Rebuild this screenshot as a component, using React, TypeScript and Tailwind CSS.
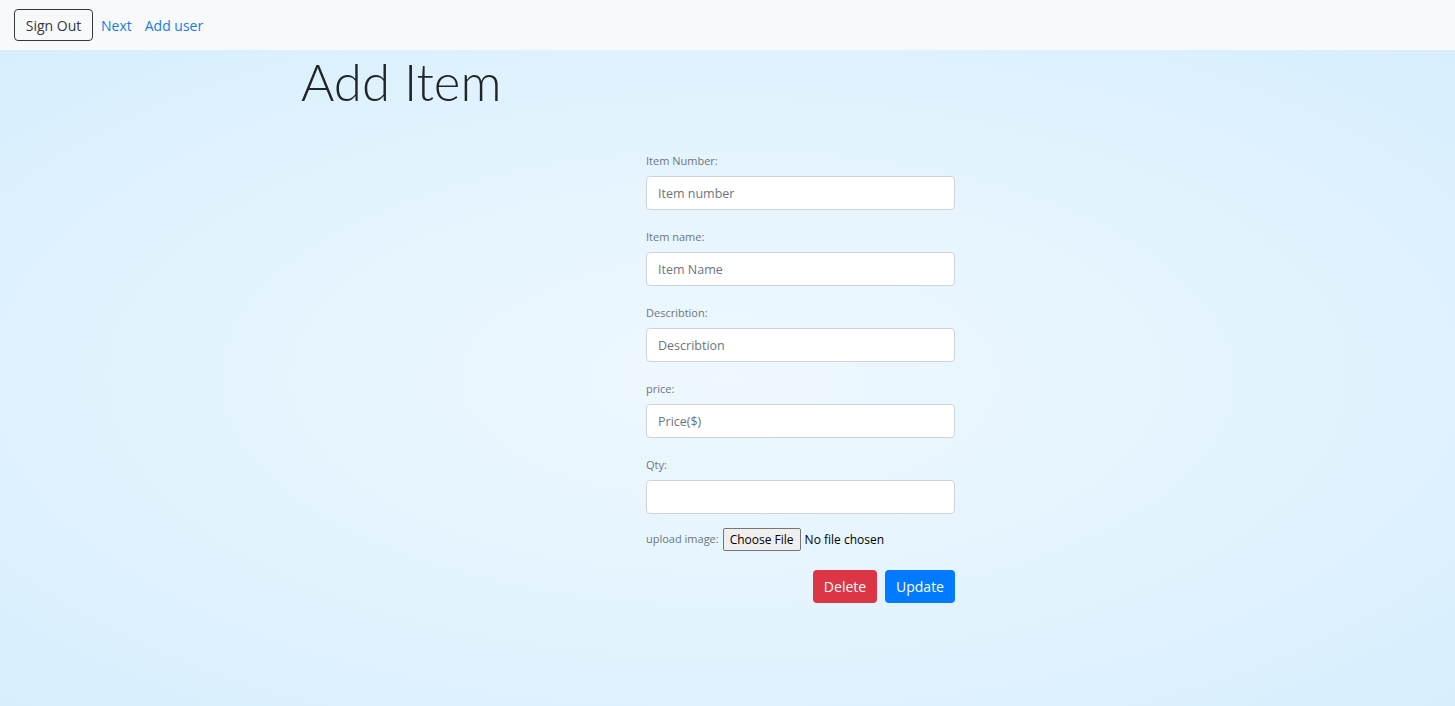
const fields = [
  { label: "Item Number:", placeholder: "Item number" },
  { label: "Item name:", placeholder: "Item Name" },
  { label: "Describtion:", placeholder: "Describtion" },
  { label: "price:", placeholder: "Price($)" },
  { label: "Qty:", placeholder: "" },
];

export default function App() {
  return (
    <div className="min-h-[706px] flex flex-col font-['Open_Sans',sans-serif] text-[#212529]">
      {/* Navbar */}
      <nav className="h-[50px] bg-[#f8f9fa] flex items-center pl-[14px] gap-2 shrink-0">
        <button className="h-[32px] w-[79px] border border-[#343a40] rounded-[4px] text-[14px] text-[#343a40]">
          Sign Out
        </button>
        <a className="text-[14px] text-[#1a7ce0]">Next</a>
        <a className="text-[14px] text-[#1a7ce0] ml-[5px]">Add user</a>
      </nav>

      {/* Main */}
      <main className="flex-1 bg-[radial-gradient(ellipse_at_center,#eef8fe_0%,#e4f4fe_50%,#d7eefd_100%)] pl-[301px]">
        <h1 className="text-[51px] font-light leading-[62px] text-[#212529] font-['Lato',sans-serif] mt-[1px]">Add Item</h1>

        <form className="ml-[345px] w-[309px] mt-[39px]">
          {fields.map((f) => (
            <div key={f.label} className="mb-[18px]">
              <label className="block text-[11px] leading-[18px] text-[#6c757d] mb-[6px]">{f.label}</label>
              <input
                type="text"
                placeholder={f.placeholder}
                className="w-full h-[34px] bg-white border border-[#ced4da] rounded-[4px] px-[11px] text-[12.5px] placeholder:text-[#6c757d] outline-none"
              />
            </div>
          ))}

          <div className="flex items-center -mt-[4px]">
            <span className="text-[11px] text-[#6c757d] mr-[4px]">upload image:</span>
            <span className="h-[23px] px-[6px] flex items-center bg-[#efefef] border border-[#767676] rounded-[2px] text-[12px] text-black">
              Choose File
            </span>
            <span className="text-[12px] text-black ml-[4px]">No file chosen</span>
          </div>

          <div className="flex justify-end gap-2 mt-[19px]">
            <button type="button" className="h-[33px] w-[64px] rounded-[4px] bg-[#dc3545] text-white text-[14px]">
              Delete
            </button>
            <button type="button" className="h-[33px] w-[70px] rounded-[4px] bg-[#007bff] text-white text-[14px]">
              Update
            </button>
          </div>
        </form>
      </main>
    </div>
  );
}
